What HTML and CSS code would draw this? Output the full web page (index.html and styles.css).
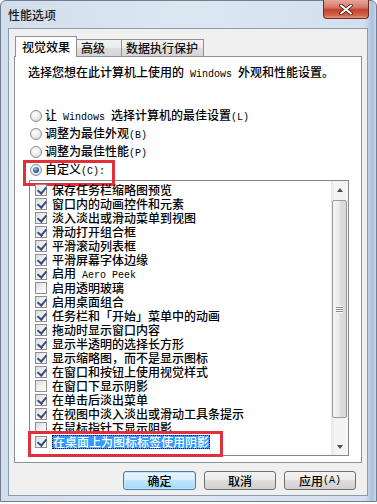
FILE: index.html
```html
<!DOCTYPE html>
<html lang="zh-CN">
<head>
<meta charset="utf-8">
<title>性能选项</title>
<link rel="stylesheet" href="styles.css">
</head>
<body>
<div class="window">
  <div class="titlebar">
    <span class="title">性能选项</span>
    <div class="close">
      <svg width="14" height="11" viewBox="0 0 14 11"><path d="M2 1.5 L12 9.5 M12 1.5 L2 9.5" stroke="#5a2118" stroke-width="3.6" stroke-linecap="round"/><path d="M2 1.5 L12 9.5 M12 1.5 L2 9.5" stroke="#ffffff" stroke-width="2" stroke-linecap="round"/></svg>
    </div>
  </div>
  <div class="client">
    <div class="tabs">
      <div class="tab active">视觉效果</div>
      <div class="tab t2">高级</div>
      <div class="tab t3">数据执行保护</div>
    </div>
    <div class="panel">
      <p class="desc">选择您想在此计算机上使用的<span class="lat"> Windows </span>外观和性能设置。</p>
      <div class="radios">
        <div class="radio-row"><span class="radio"></span><span class="lbl">让<span class="lat"> Windows </span>选择计算机的最佳设置<span class="lat">(L)</span></span></div>
        <div class="radio-row"><span class="radio"></span><span class="lbl">调整为最佳外观<span class="lat">(B)</span></span></div>
        <div class="radio-row"><span class="radio"></span><span class="lbl">调整为最佳性能<span class="lat">(P)</span></span></div>
        <div class="radio-row custom"><span class="radio on"></span><span class="lbl">自定义<span class="lat">(C):</span></span></div>
      </div>
      <div class="listbox">
        <div class="items">
          <div class="item"><span class="cb on"></span><span class="lbl">保存任务栏缩略图预览</span></div>
          <div class="item"><span class="cb on"></span><span class="lbl">窗口内的动画控件和元素</span></div>
          <div class="item"><span class="cb on"></span><span class="lbl">淡入淡出或滑动菜单到视图</span></div>
          <div class="item"><span class="cb on"></span><span class="lbl">滑动打开组合框</span></div>
          <div class="item"><span class="cb on"></span><span class="lbl">平滑滚动列表框</span></div>
          <div class="item"><span class="cb on"></span><span class="lbl">平滑屏幕字体边缘</span></div>
          <div class="item"><span class="cb on"></span><span class="lbl">启用<span class="lat"> Aero Peek</span></span></div>
          <div class="item"><span class="cb"></span><span class="lbl">启用透明玻璃</span></div>
          <div class="item"><span class="cb on"></span><span class="lbl">启用桌面组合</span></div>
          <div class="item"><span class="cb on"></span><span class="lbl">任务栏和「开始」菜单中的动画</span></div>
          <div class="item"><span class="cb on"></span><span class="lbl">拖动时显示窗口内容</span></div>
          <div class="item"><span class="cb on"></span><span class="lbl">显示半透明的选择长方形</span></div>
          <div class="item"><span class="cb on"></span><span class="lbl">显示缩略图，而不是显示图标</span></div>
          <div class="item"><span class="cb on"></span><span class="lbl">在窗口和按钮上使用视觉样式</span></div>
          <div class="item"><span class="cb"></span><span class="lbl">在窗口下显示阴影</span></div>
          <div class="item"><span class="cb on"></span><span class="lbl">在单击后淡出菜单</span></div>
          <div class="item"><span class="cb on"></span><span class="lbl">在视图中淡入淡出或滑动工具条提示</span></div>
          <div class="item"><span class="cb"></span><span class="lbl">在鼠标指针下显示阴影</span></div>
          <div class="item marked"><span class="cb on"></span><span class="lbl sel">在桌面上为图标标签使用阴影</span></div>
        </div>
        <div class="scrollbar">
          <div class="sb-btn"><span class="arrow up"></span></div>
          <div class="sb-track">
            <div class="thumb"><span class="grip"></span></div>
          </div>
          <div class="sb-btn"><span class="arrow down"></span></div>
        </div>
      </div>
    </div>
    <div class="buttons">
      <div class="btn default">确定</div>
      <div class="btn">取消</div>
      <div class="btn">应用<span class="lat">(A)</span></div>
    </div>
  </div>
</div>
</body>
</html>
```

FILE: styles.css
```css
* { box-sizing: border-box; }

body {
  margin: 0;
  background: #ffffff;
  font-family: "Noto Sans CJK SC", "Liberation Sans", sans-serif;
  font-size: 12px;
  font-weight: 500;
  color: #000;
}

.lat {
  font-family: "Liberation Mono", "Noto Sans CJK SC", monospace;
  font-size: 10px;
  font-weight: 400;
}

.window {
  width: 377px;
  height: 502px;
  border: 1px solid #6f7e92;
  border-radius: 6px 6px 0 0;
  background: linear-gradient(90deg, #d3deeb 0%, #dde7f2 50%, #d3dfee 97%, #a9c2e0 99%, #c9d8ea 100%);
  display: flex;
  flex-direction: column;
  padding: 0 8px 5px 7px;
}

.titlebar {
  height: 27px;
  display: flex;
  align-items: flex-start;
}

.title {
  padding-top: 6px;
  line-height: 16px;
  font-size: 12px;
  color: #1a1a1a;
}

.close {
  margin-left: auto;
  margin-top: -1px;
  margin-right: -1px;
  width: 46px;
  height: 19px;
  border: 1px solid #6b2b22;
  border-top: none;
  border-radius: 0 0 4px 4px;
  background: linear-gradient(#e4a99d 0%, #d67a69 40%, #c4422c 55%, #d2644c 85%, #e39a82 100%);
  display: flex;
  align-items: center;
  justify-content: center;
}

.client {
  flex: 1;
  background: #f0f0f0;
  border: 1px solid #8a9bb0;
  padding: 7px 5px 0 5px;
  display: flex;
  flex-direction: column;
}

.tabs {
  display: flex;
  align-items: flex-end;
  height: 21px;
  padding-left: 1px;
  margin-bottom: -1px;
  position: relative;
  z-index: 1;
}

.tab {
  border: 1px solid #8e9298;
  border-bottom: none;
  line-height: 16px;
  white-space: nowrap;
}

.tab.active {
  height: 21px;
  background: #ffffff;
  padding: 2px 6px 0 6px;
}

.tab.t2, .tab.t3 {
  height: 17px;
  margin-bottom: 1px;
  border-left: none;
  background: linear-gradient(#f3f3f3 0%, #ebebeb 50%, #dddddd 51%, #d5d5d5 100%);
  padding: 0 0 0 4px;
  color: #111;
}

.tab.t2 { width: 45px; }
.tab.t3 { width: 82px; }

.panel {
  height: 407px;
  background: #ffffff;
  border: 1px solid #8e9298;
  padding: 0 13px 0 13px;
  display: flex;
  flex-direction: column;
}

.desc {
  margin: 8px 0 0 0;
  line-height: 14px;
  white-space: nowrap;
}

.radios {
  margin-top: 25px;
  display: flex;
  flex-direction: column;
}

.radio-row {
  height: 18px;
  display: flex;
  align-items: center;
  gap: 3px;
  padding-left: 2px;
  white-space: nowrap;
  position: relative;
}

.lbl {
  line-height: 14px;
  white-space: nowrap;
}

.radio {
  width: 12px;
  height: 12px;
  flex: none;
  border-radius: 50%;
  border: 1px solid #8d8d8d;
  background: radial-gradient(circle at 40% 35%, #ffffff 0%, #e9e9e9 55%, #cfcfcf 100%);
  position: relative;
}

.radio.on::after {
  content: "";
  position: absolute;
  left: 2px;
  top: 2px;
  width: 6px;
  height: 6px;
  border-radius: 50%;
  background: radial-gradient(circle at 40% 35%, #8fc6f0 0%, #2a6fa8 50%, #0f3f6e 100%);
}

.radio-row.custom::after {
  content: "";
  position: absolute;
  left: -5px;
  top: -1px;
  width: 86px;
  height: 20px;
  border: 3px solid #e0303c;
}

.listbox {
  margin: 1px 0 0 1px;
  width: 320px;
  height: 276px;
  border: 1px solid #828790;
  display: flex;
}

.items {
  flex: 1;
  padding-top: 2px;
}

.item {
  height: 14px;
  display: flex;
  align-items: center;
  gap: 5px;
  padding-left: 5px;
  white-space: nowrap;
  position: relative;
}

.cb {
  width: 12px;
  height: 12px;
  flex: none;
  border: 1px solid #8f8f8f;
  background: linear-gradient(135deg, #dcdcdc 0%, #f4f4f4 60%, #ffffff 100%);
  position: relative;
}

.cb.on::after {
  content: "";
  position: absolute;
  left: 3px;
  top: 0px;
  width: 4px;
  height: 7px;
  border-right: 2px solid #3b4f85;
  border-bottom: 2px solid #3b4f85;
  transform: rotate(40deg);
}

.sel {
  background: #3399ff;
  color: #ffffff;
  padding: 0 1px;
  outline: 1px dotted #000;
  outline-offset: -1px;
}

.item.marked::after {
  content: "";
  position: absolute;
  left: -2px;
  top: -4px;
  width: 189px;
  height: 20px;
  border: 3px solid #e0303c;
}

.scrollbar {
  width: 17px;
  flex: none;
  display: flex;
  flex-direction: column;
  background: linear-gradient(90deg, #e6e6e6 0%, #f4f4f4 20%, #f4f4f4 100%);
}

.sb-btn {
  height: 17px;
  display: flex;
  align-items: center;
  justify-content: center;
}

.arrow {
  width: 0;
  height: 0;
  border-left: 3.5px solid transparent;
  border-right: 3.5px solid transparent;
}

.arrow.up { border-bottom: 4px solid #505050; }
.arrow.down { border-top: 4px solid #505050; }

.sb-track {
  flex: 1;
  padding: 2px 1px 0 1px;
}

.thumb {
  height: 218px;
  border: 1px solid #9b9b9b;
  border-radius: 2px;
  background: linear-gradient(90deg, #f5f5f5 0%, #ececec 45%, #dedede 55%, #d6d6d6 100%);
  display: flex;
  align-items: center;
  justify-content: center;
}

.grip {
  width: 7px;
  height: 7px;
  background: repeating-linear-gradient(#f7f7f7 0px, #f7f7f7 1px, #8c8c8c 1px, #8c8c8c 2px, transparent 2px, transparent 2px);
}

.buttons {
  margin-top: 8px;
  padding-right: 6px;
  display: flex;
  justify-content: flex-end;
  gap: 8px;
}

.btn {
  width: 72px;
  height: 19px;
  border: 1px solid #707070;
  border-radius: 3px;
  background: linear-gradient(#f2f2f2 0%, #ebebeb 45%, #dddddd 50%, #cfcfcf 100%);
  display: flex;
  align-items: center;
  justify-content: center;
  line-height: 14px;
  white-space: nowrap;
}

.btn.default {
  width: 73px;
  border-color: #3c7fb1;
  background: linear-gradient(#eaf6fd 0%, #d9f0fc 45%, #bee6fd 50%, #a7d9f5 100%);
  box-shadow: inset 0 0 0 1px #c4e5f6;
}
```
